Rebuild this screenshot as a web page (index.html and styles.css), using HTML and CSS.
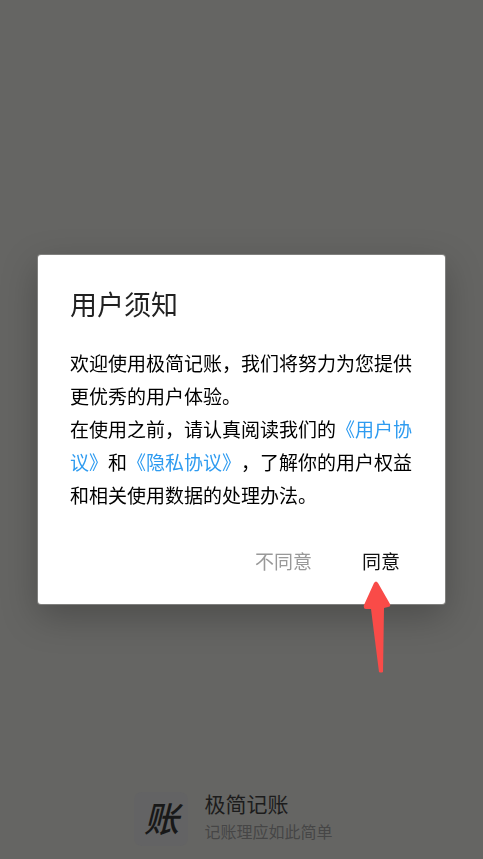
FILE: index.html
```html
<!DOCTYPE html>
<html lang="zh-CN">
<head>
    <meta charset="UTF-8">
    <meta name="viewport" content="width=device-width, initial-scale=1.0">
    <title>极简记账</title>
    <link rel="stylesheet" href="styles.css">
</head>
<body>
    <footer class="brand">
        <div class="brand-logo">账</div>
        <div class="brand-text">
            <div class="brand-name">极简记账</div>
            <div class="brand-slogan">记账理应如此简单</div>
        </div>
    </footer>

    <div class="overlay">
        <section class="dialog" role="dialog" aria-modal="true" aria-labelledby="dialog-title">
            <h1 class="dialog-title" id="dialog-title">用户须知</h1>
            <div class="dialog-body">
                <p>欢迎使用极简记账，我们将努力为您提供更优秀的用户体验。</p>
                <p>在使用之前，请认真阅读我们的<a href="#terms">《用户协议》</a>和<a href="#privacy">《隐私协议》</a>，了解你的用户权益和相关使用数据的处理办法。</p>
            </div>
            <div class="dialog-actions">
                <button type="button" class="btn btn-muted">不同意</button>
                <div class="agree">
                    <button type="button" class="btn">同意</button>
                    <svg class="pointer" viewBox="0 0 28 92" width="28" height="92" aria-hidden="true">
                        <path d="M11 2 Q13 -1 15 2 L27 23 Q28 26 25 26 L21 27 L20 91 Q18 92 16 91 L8 28 L3 28 Q0 28 1 24 Z" fill="#f94b48"/>
                    </svg>
                </div>
            </div>
        </section>
    </div>
</body>
</html>
```

FILE: styles.css
```css
* {
    box-sizing: border-box;
}
body {
    margin: 0;
    min-height: 100vh;
    display: flex;
    flex-direction: column;
    justify-content: flex-end;
    background: #656563;
    color: #000;
    font-family: "Noto Sans CJK SC", sans-serif;
    font-weight: 400;
    text-spacing-trim: space-all;
}
h1, p {
    margin: 0;
}

/* Brand at the bottom of the splash screen */
.brand {
    display: flex;
    justify-content: center;
    align-items: center;
    gap: 16px;
    padding: 0 32px 9px 16px;
}
.brand-logo {
    width: 54px;
    height: 54px;
    border-radius: 8px;
    background: #636364;
    color: #181818;
    font-size: 35px;
    font-weight: 500;
    font-style: italic;
    line-height: 50px;
    text-align: center;
}
.brand-text {
    padding-bottom: 6px;
}
.brand-name {
    color: #1c1c1c;
    font-size: 21px;
    line-height: 30px;
}
.brand-slogan {
    color: #464646;
    font-size: 16px;
    line-height: 26px;
}

/* Dialog */
.overlay {
    position: fixed;
    inset: 0;
    display: flex;
    align-items: center;
    justify-content: center;
    padding: 0 38px;
}
.dialog {
    width: 100%;
    max-width: 560px;
    padding: 30px 0 17px;
    border-radius: 3px;
    background: #fff;
    box-shadow: 0 0 0 1px #80807e, 0 12px 36px rgba(0, 0, 0, 0.25);
}
.dialog-title {
    padding: 0 32px;
    color: #212121;
    font-size: 27px;
    font-weight: 400;
    line-height: 37px;
}
.dialog-body {
    padding: 24px 32px;
    font-size: 19px;
    line-height: 33px;
}
.dialog-body a {
    color: #2e9bf0;
    text-decoration: none;
}
.dialog-actions {
    display: flex;
    justify-content: flex-end;
    padding-right: 20px;
}
.btn {
    padding: 0 25px;
    border: none;
    background: none;
    color: #111;
    font: inherit;
    font-size: 19px;
    line-height: 52px;
    cursor: pointer;
}
.btn-muted {
    color: #999;
}
.agree {
    position: relative;
}
.pointer {
    position: absolute;
    top: 46px;
    left: 26px;
    pointer-events: none;
}
```
